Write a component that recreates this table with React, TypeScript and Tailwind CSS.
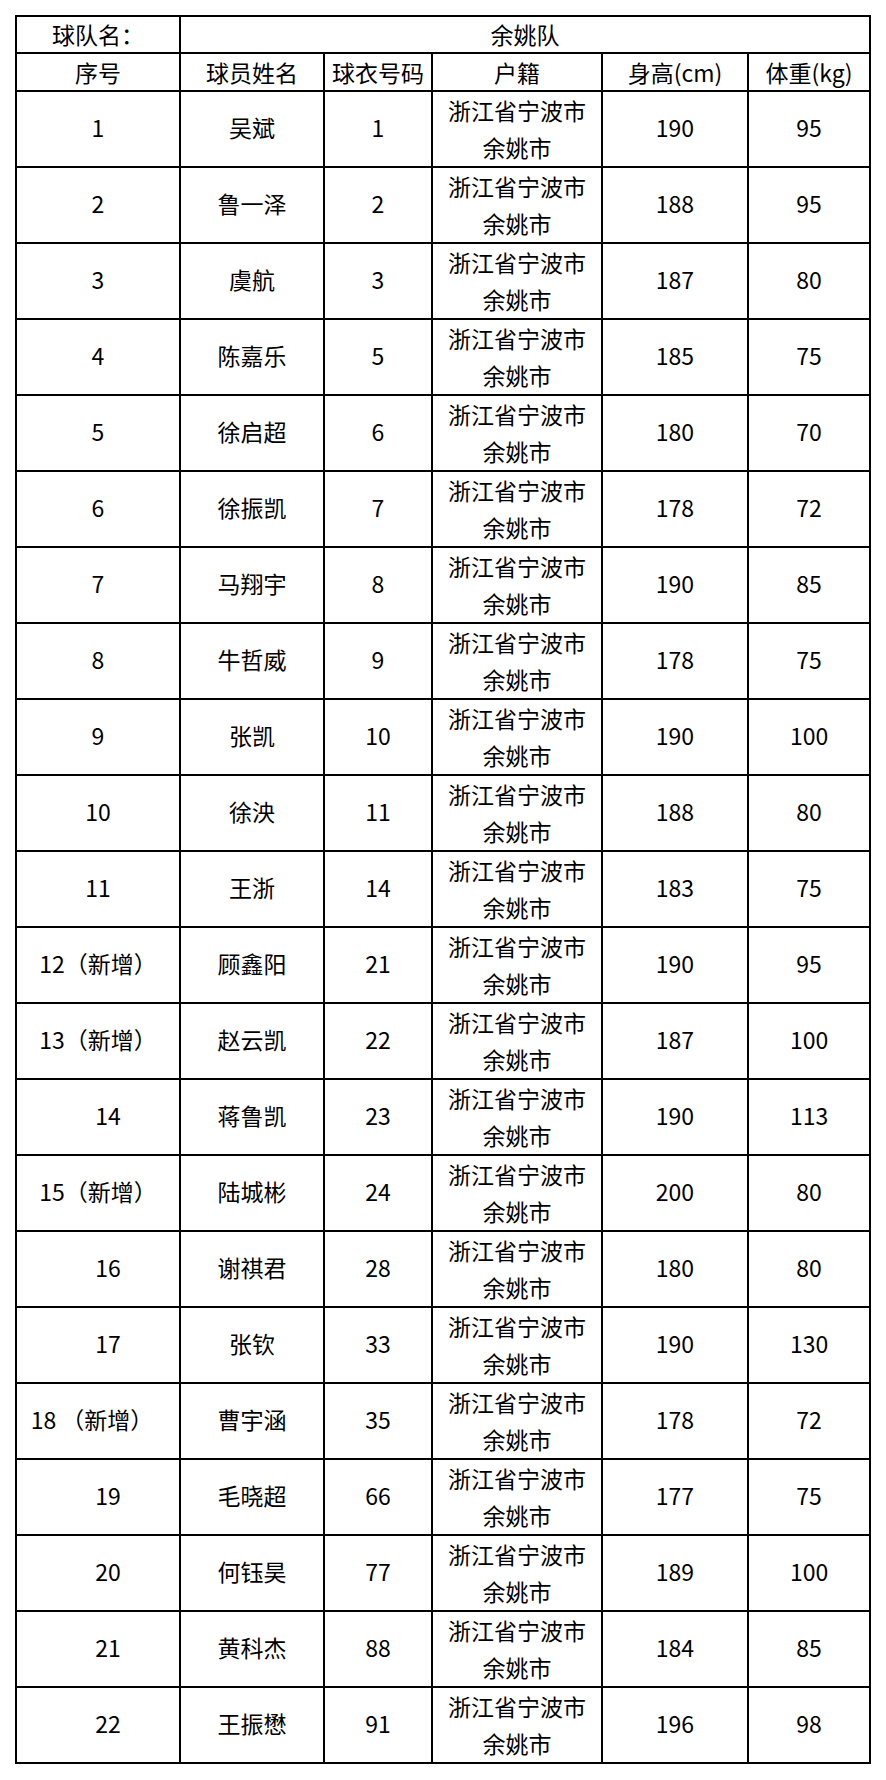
import React from 'react';

type Player = {
  no: string;
  name: string;
  jersey: string;
  height: string;
  weight: string;
  shift?: 'right' | 'left';
};

const players: Player[] = [
  { no: '1', name: '吴斌', jersey: '1', height: '190', weight: '95' },
  { no: '2', name: '鲁一泽', jersey: '2', height: '188', weight: '95' },
  { no: '3', name: '虞航', jersey: '3', height: '187', weight: '80' },
  { no: '4', name: '陈嘉乐', jersey: '5', height: '185', weight: '75' },
  { no: '5', name: '徐启超', jersey: '6', height: '180', weight: '70' },
  { no: '6', name: '徐振凯', jersey: '7', height: '178', weight: '72' },
  { no: '7', name: '马翔宇', jersey: '8', height: '190', weight: '85' },
  { no: '8', name: '牛哲威', jersey: '9', height: '178', weight: '75' },
  { no: '9', name: '张凯', jersey: '10', height: '190', weight: '100' },
  { no: '10', name: '徐泱', jersey: '11', height: '188', weight: '80' },
  { no: '11', name: '王浙', jersey: '14', height: '183', weight: '75' },
  { no: '12（新增）', name: '顾鑫阳', jersey: '21', height: '190', weight: '95' },
  { no: '13（新增）', name: '赵云凯', jersey: '22', height: '187', weight: '100' },
  { no: '14', name: '蒋鲁凯', jersey: '23', height: '190', weight: '113', shift: 'right' },
  { no: '15（新增）', name: '陆城彬', jersey: '24', height: '200', weight: '80' },
  { no: '16', name: '谢祺君', jersey: '28', height: '180', weight: '80', shift: 'right' },
  { no: '17', name: '张钦', jersey: '33', height: '190', weight: '130', shift: 'right' },
  { no: '18 （新增）', name: '曹宇涵', jersey: '35', height: '178', weight: '72', shift: 'left' },
  { no: '19', name: '毛晓超', jersey: '66', height: '177', weight: '75', shift: 'right' },
  { no: '20', name: '何钰昊', jersey: '77', height: '189', weight: '100', shift: 'right' },
  { no: '21', name: '黄科杰', jersey: '88', height: '184', weight: '85', shift: 'right' },
  { no: '22', name: '王振懋', jersey: '91', height: '196', weight: '98', shift: 'right' },
];

const cell = 'border-2 border-black text-center align-middle p-0';
// single-line data cells sit a touch above the middle
const single = `${cell} pb-[4px]`;

export default function App() {
  return (
    <div
      className="min-h-screen bg-white pt-[15px] pl-[15px] text-black text-[23px] leading-[37px]"
      style={{ fontFamily: '"Noto Sans CJK SC", "Noto Sans", sans-serif' }}
    >
      <table className="table-fixed border-collapse w-[856px]">
        <colgroup>
          <col className="w-[164px]" />
          <col className="w-[144px]" />
          <col className="w-[108px]" />
          <col className="w-[170px]" />
          <col className="w-[146px]" />
          <col className="w-[122px]" />
        </colgroup>
        <tbody>
          <tr className="leading-[35px]">
            <td className={cell}>球队名：</td>
            <td className={cell} colSpan={5}>
              余姚队
            </td>
          </tr>
          <tr className="leading-[36px]">
            <td className={cell}>序号</td>
            <td className={cell}>球员姓名</td>
            <td className={`${cell} whitespace-nowrap`}>球衣号码</td>
            <td className={cell}>户籍</td>
            <td className={cell}>身高(cm)</td>
            <td className={cell}>体重(kg)</td>
          </tr>
          {players.map((p) => (
            <tr key={p.name} className="h-[76px]">
              <td
                className={`${single} whitespace-pre ${
                  p.shift === 'right' ? 'pl-[20px]' : p.shift === 'left' ? 'pr-[12px]' : ''
                }`}
              >
                {p.no}
              </td>
              <td className={single}>{p.name}</td>
              <td className={single}>{p.jersey}</td>
              <td className={cell}>
                <div>浙江省宁波市</div>
                <div>余姚市</div>
              </td>
              <td className={single}>{p.height}</td>
              <td className={single}>{p.weight}</td>
            </tr>
          ))}
        </tbody>
      </table>
    </div>
  );
}
